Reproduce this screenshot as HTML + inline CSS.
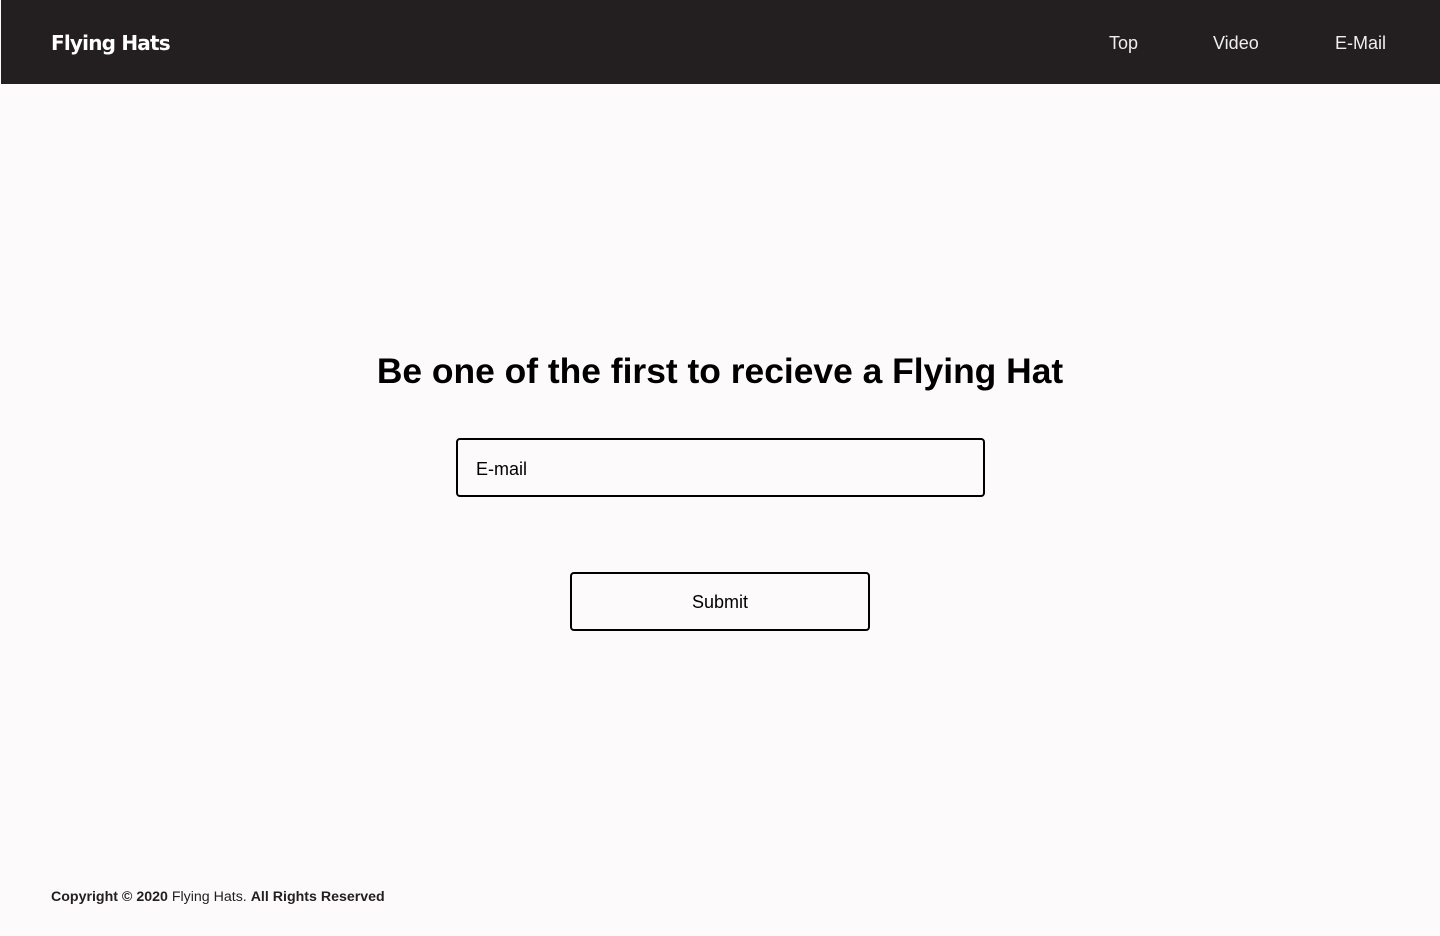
<!DOCTYPE html>
<html><head><style>
body{margin:0;width:1440px;height:936px;background:#fcfafb;font-family:"Liberation Sans",sans-serif;position:relative;overflow:hidden}
.hd{position:absolute;left:1px;top:0;width:1439px;height:84px;background:#231f20;color:#fff}
.logo{position:absolute;left:50px;top:31px;font-size:20px;font-weight:bold;font-family:"DejaVu Sans",sans-serif;letter-spacing:-0.8px}
.nav{position:absolute;top:33px;font-size:18px;color:#eee}
h1{position:absolute;top:351px;left:0;width:1440px;margin:0;text-align:center;font-size:35.4px;font-weight:bold;color:#000}
.in{position:absolute;left:456px;top:438px;width:525px;height:55px;border:2px solid #000;border-radius:4px;font-size:18px;box-sizing:content-box}
.in span{position:absolute;left:18px;top:19px}
.btn{position:absolute;left:570px;top:572px;width:296px;height:55px;border:2px solid #000;border-radius:4px;font-size:18px;text-align:center;line-height:57px}
.ft{position:absolute;left:51px;top:889px;font-size:14.2px;color:#231f20}
</style></head><body>
<div class="hd"><div class="logo">Flying Hats</div>
<div class="nav" style="left:1108px">Top</div>
<div class="nav" style="left:1212px">Video</div>
<div class="nav" style="left:1334px">E-Mail</div></div>
<h1>Be one of the first to recieve a Flying Hat</h1>
<div class="in"><span>E-mail</span></div>
<div class="btn">Submit</div>
<div class="ft"><b>Copyright © 2020</b> Flying Hats. <b>All Rights Reserved</b></div>
</body></html>
